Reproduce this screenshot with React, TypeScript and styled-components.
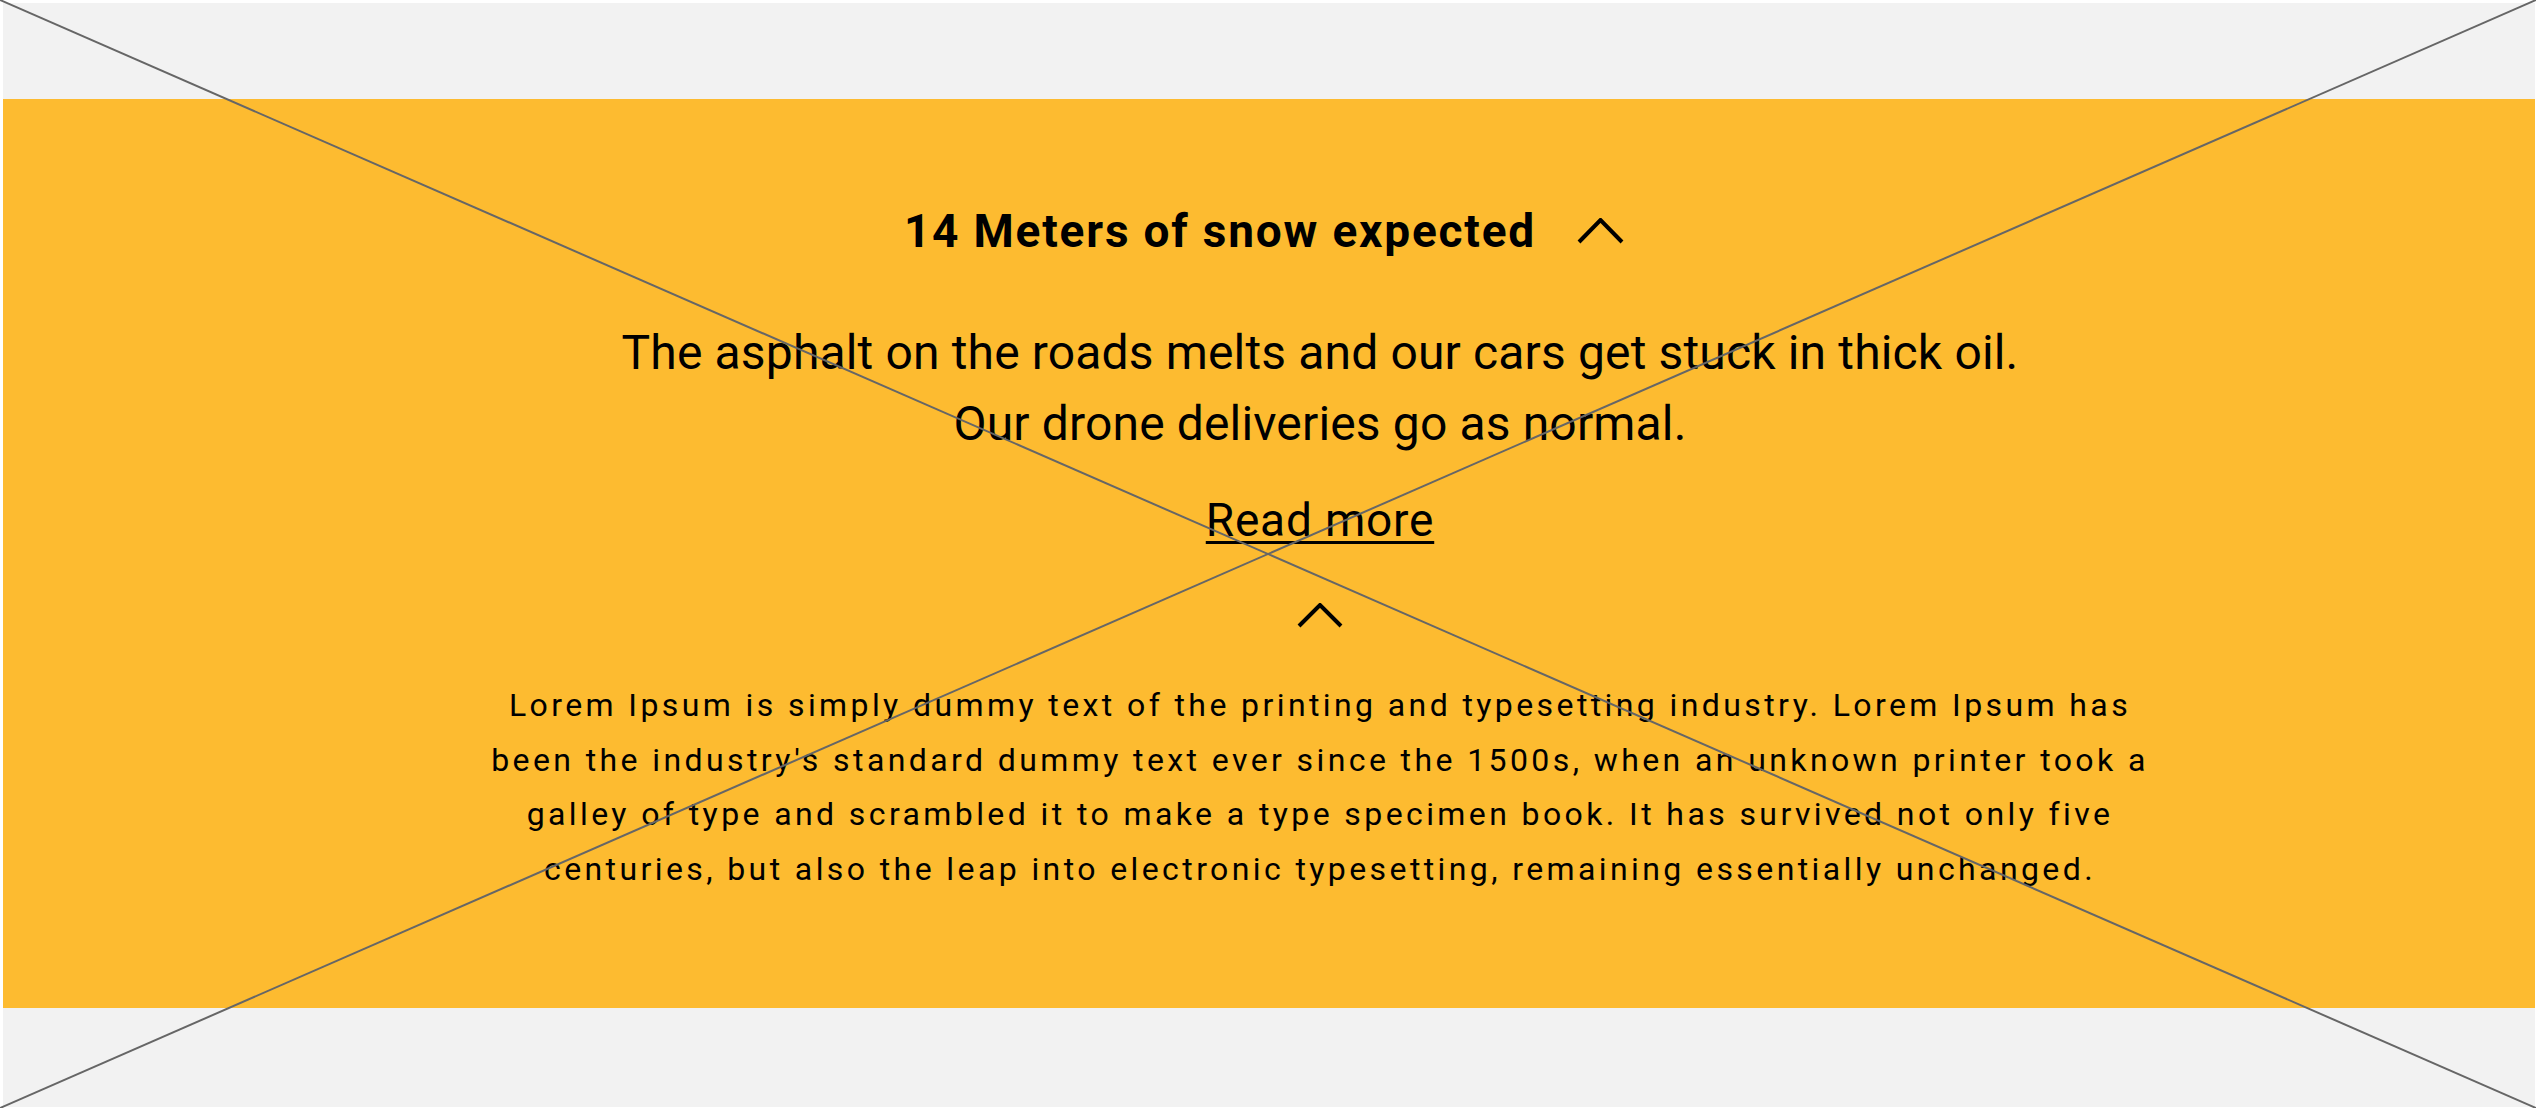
import React from "react";
import styled, { createGlobalStyle } from "styled-components";

const GlobalStyle = createGlobalStyle`
  html, body {
    margin: 0;
    padding: 0;
    background: #ffffff;
  }
  * { box-sizing: border-box; }
  body {
    font-family: Roboto, "Liberation Sans", Arial, sans-serif;
    color: #000;
  }
`;

const Page = styled.div`
  position: relative;
  width: 2536px;
  height: 1108px;
  padding: 3px 1px 1px 3px;
  overflow: hidden;
`;

const Frame = styled.div`
  display: flex;
  flex-direction: column;
  width: 100%;
  height: 100%;
  background: #f2f2f2;
  padding-top: 96px;
`;

const Band = styled.section`
  display: flex;
  flex-direction: column;
  align-items: center;
  height: 909px;
  background: #fdbb30;
  padding-top: 104px;
`;

const HeadingRow = styled.button`
  display: flex;
  align-items: center;
  gap: 41px;
  height: 56px;
  margin: 0 10px 0 0;
  padding: 0;
  border: 0;
  background: none;
  cursor: pointer;
  color: #000;
`;

const Heading = styled.h2`
  margin: 0;
  font-family: Roboto, "Liberation Sans", sans-serif;
  font-weight: 700;
  font-size: 46px;
  line-height: 56px;
  letter-spacing: 1.8px;
`;

const Content = styled.div`
  display: flex;
  flex-direction: column;
  align-items: center;
  margin-left: 102px;
  margin-top: 58px;
`;

const Lead = styled.p`
  margin: 0;
  font-family: Roboto, "Liberation Sans", sans-serif;
  font-weight: 400;
  font-size: 48px;
  line-height: 71px;
  letter-spacing: 0.15px;
  text-align: center;
`;

const ReadMore = styled.a`
  display: block;
  margin-top: 33px;
  font-family: Roboto, "Liberation Sans", sans-serif;
  font-size: 46px;
  line-height: 56px;
  letter-spacing: 0.8px;
  color: #000;
  text-decoration: underline;
  text-decoration-thickness: 3px;
  text-underline-offset: 5px;
  cursor: pointer;
`;

const ChevronButton = styled.button`
  display: flex;
  margin: 55px 0 0;
  padding: 0;
  border: 0;
  background: none;
  cursor: pointer;
`;

const Body = styled.p`
  margin: 50px 0 0;
  font-family: Roboto, "Liberation Sans", sans-serif;
  font-size: 32px;
  line-height: 54.5px;
  letter-spacing: 3.4px;
  text-align: center;
  white-space: nowrap;
`;

const Overlay = styled.svg`
  position: absolute;
  inset: 0;
  width: 2536px;
  height: 1108px;
  pointer-events: none;
`;

const Chevron = ({ w, h }: { w: number; h: number }) => (
  <svg width={w} height={h} viewBox={`0 0 ${w} ${h}`} fill="none">
    <polyline
      points={`2,${h - 2} ${w / 2},2 ${w - 2},${h - 2}`}
      stroke="#000"
      strokeWidth={4}
      strokeLinecap="butt"
      strokeLinejoin="miter"
    />
  </svg>
);

export default function App() {
  return (
    <>
      <GlobalStyle />
      <Page>
        <Frame>
          <Band>
            <HeadingRow type="button" aria-expanded="true">
              <Heading>14 Meters of snow expected</Heading>
              <Chevron w={47} h={26} />
            </HeadingRow>
            <Content>
              <Lead>
                The asphalt on the roads melts and our cars get stuck in thick oil.
                <br />
                Our drone deliveries go as normal.
              </Lead>
              <ReadMore href="#">Read more</ReadMore>
              <ChevronButton type="button" aria-label="Collapse">
                <Chevron w={46} h={25} />
              </ChevronButton>
              <Body>
                Lorem Ipsum is simply dummy text of the printing and typesetting industry. Lorem Ipsum has
                <br />
                been the industry's standard dummy text ever since the 1500s, when an unknown printer took a
                <br />
                galley of type and scrambled it to make a type specimen book. It has survived not only five
                <br />
                centuries, but also the leap into electronic typesetting, remaining essentially unchanged.
              </Body>
            </Content>
          </Band>
        </Frame>
        <Overlay viewBox="0 0 2536 1108">
          <line x1="0" y1="0" x2="2536" y2="1108" stroke="#666" strokeWidth="2" />
          <line x1="2536" y1="0" x2="0" y2="1108" stroke="#666" strokeWidth="2" />
        </Overlay>
      </Page>
    </>
  );
}
